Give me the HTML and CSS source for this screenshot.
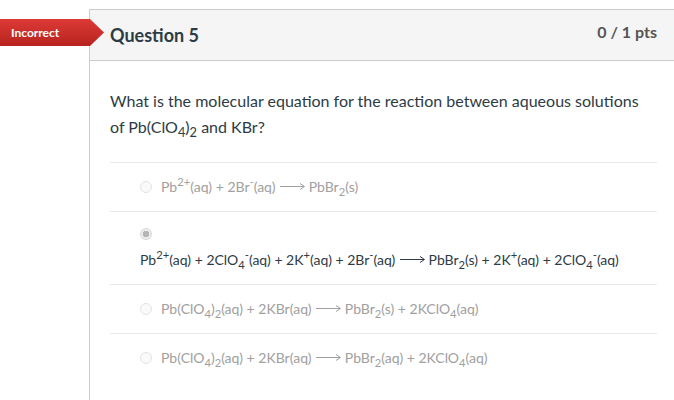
FILE: index.html
```html
<!DOCTYPE html>
<html lang="en">
<head>
  <meta charset="UTF-8" />
  <title>Question 5</title>
  <link rel="stylesheet" href="styles.css">
</head>
<body>

  <div class="page">
    <div class="tag">Incorrect</div>

    <div class="card">
      <div class="card-header">
        <h2>Question 5</h2>
        <span class="pts">0 / 1 pts</span>
      </div>

      <div class="card-body">
        <p class="question">What is the molecular equation for the reaction between aqueous solutions of Pb(ClO<sub>4</sub>)<sub>2</sub> and KBr?</p>

        <div class="answer">
          <span class="radio"></span>
          <span>Pb<sup>2+</sup>(aq) + 2Br<sup>-</sup>(aq) <svg class="arrow" viewBox="0 0 25 9"><path d="M0 4.5H24M20 1.5L24.5 4.5L20 7.5"/></svg> PbBr<sub>2</sub>(s)</span>
        </div>

        <div class="answer answer-picked">
          <span class="radio radio-on"></span>
          <span>Pb<sup>2+</sup>(aq) + 2ClO<sub>4</sub><sup>-</sup>(aq) + 2K<sup>+</sup>(aq) + 2Br<sup>-</sup>(aq) <svg class="arrow" viewBox="0 0 25 9"><path d="M0 4.5H24M20 1.5L24.5 4.5L20 7.5"/></svg> PbBr<sub>2</sub>(s) + 2K<sup>+</sup>(aq) + 2ClO<sub>4</sub><sup>-</sup>(aq)</span>
        </div>

        <div class="answer">
          <span class="radio"></span>
          <span>Pb(ClO<sub>4</sub>)<sub>2</sub>(aq) + 2KBr(aq) <svg class="arrow" viewBox="0 0 25 9"><path d="M0 4.5H24M20 1.5L24.5 4.5L20 7.5"/></svg> PbBr<sub>2</sub>(s) + 2KClO<sub>4</sub>(aq)</span>
        </div>

        <div class="answer">
          <span class="radio"></span>
          <span>Pb(ClO<sub>4</sub>)<sub>2</sub>(aq) + 2KBr(aq) <svg class="arrow" viewBox="0 0 25 9"><path d="M0 4.5H24M20 1.5L24.5 4.5L20 7.5"/></svg> PbBr<sub>2</sub>(aq) + 2KClO<sub>4</sub>(aq)</span>
        </div>
      </div>
    </div>
  </div>

</body>
</html>
```

FILE: styles.css
```css
body {
  font-family: Lato, 'Open Sans', sans-serif;
  margin: 0;
  background: #fff;
  color: #2d3b45;
  overflow: hidden;
}

.page {
  position: relative;
  padding: 9px 0 0 89px;
}

.tag {
  position: absolute;
  left: 0;
  top: 19px;
  width: 93px;
  height: 27px;
  padding-left: 11px;
  line-height: 27px;
  font-size: 12px;
  font-weight: bold;
  color: #fff;
  background: linear-gradient(to bottom, #dc3a35, #b8231f);
  clip-path: polygon(0 0, 90px 0, 104px 50%, 90px 100%, 0 100%);
  z-index: 2;
}

.card {
  width: 587px;
  height: 420px;
  border: 1px solid #c7cdd1;
}

.card-header {
  display: flex;
  justify-content: space-between;
  align-items: center;
  height: 50px;
  padding: 0 20px;
  background: #f5f5f5;
  border-bottom: 1px solid #c7cdd1;
}

.card-header h2 {
  margin: 0;
  font-size: 18px;
  font-weight: bold;
  color: #2d3b45;
}

.pts {
  font-size: 16px;
  font-weight: bold;
  color: #555;
  align-self: flex-start;
  padding-top: 12px;
}

.card-body {
  padding: 27px 20px 0;
}

.question {
  margin: 0 0 22px;
  padding-right: 10px;
  font-size: 16px;
  line-height: 26px;
  color: #2d3b45;
}

sub, sup {
  font-size: 80%;
  line-height: 0;
}

.answer {
  display: flex;
  align-items: center;
  gap: 9px;
  padding: 15px 0 15px 30px;
  border-top: 1px solid #e8e8e8;
  font-size: 14px;
  line-height: 18px;
  color: #a0a0a0;
}

.answer-picked {
  flex-direction: column;
  align-items: flex-start;
  gap: 11px;
  padding: 16px 0 15px 30px;
  color: #2d3b45;
}

.arrow {
  width: 25px;
  height: 9px;
  margin-left: 1px;
  vertical-align: 1px;
  fill: none;
  stroke: currentColor;
  stroke-width: 1;
}

.radio {
  width: 12px;
  height: 12px;
  border: 1px solid #e3e3e3;
  border-radius: 50%;
  box-sizing: border-box;
  background: #fafafa;
  flex-shrink: 0;
}

.radio-on {
  background: radial-gradient(circle, #b5b5b5 0 3px, #ececec 3.5px);
  border-color: #d8d8d8;
}
```
